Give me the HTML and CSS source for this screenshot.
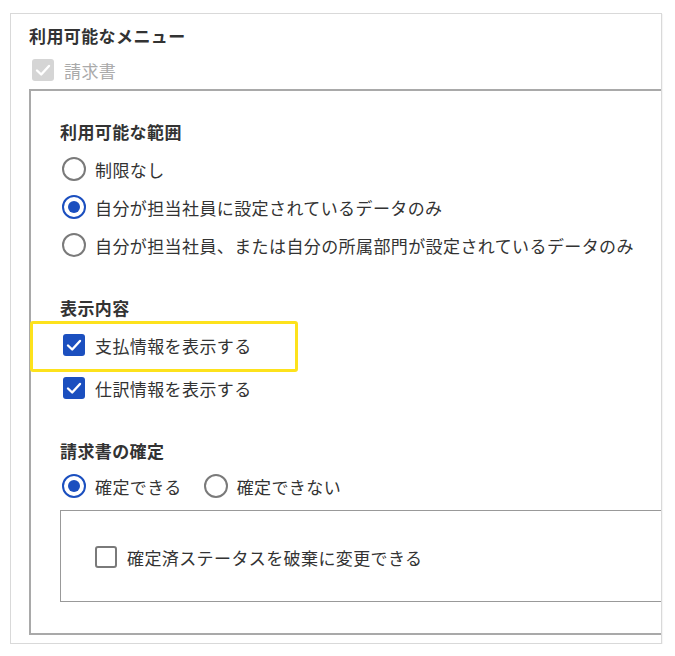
FILE: index.html
```html
<!DOCTYPE html>
<html lang="ja">
<head>
<meta charset="utf-8">
<link rel="stylesheet" href="styles.css">
</head>
<body>
<div class="panel">
  <div class="title">利用可能なメニュー</div>
  <div class="row menu-row">
    <span class="cb cb-disabled"><svg viewBox="0 0 22 22"><polyline points="5,11.5 9.2,15.5 17,7"/></svg></span>
    <span class="label-disabled">請求書</span>
  </div>
  <div class="settings">
    <div class="section">
      <div class="heading">利用可能な範囲</div>
      <div class="opts">
        <div class="row"><span class="radio"></span><span>制限なし</span></div>
        <div class="row"><span class="radio on"></span><span>自分が担当社員に設定されているデータのみ</span></div>
        <div class="row"><span class="radio"></span><span>自分が担当社員、または自分の所属部門が設定されているデータのみ</span></div>
      </div>
    </div>
    <div class="section">
      <div class="heading">表示内容</div>
      <div class="opts checks">
        <div class="row highlighted">
          <span class="cb cb-on"><svg viewBox="0 0 22 22"><polyline points="5,11.5 9.2,15.5 17,7"/></svg></span>
          <span>支払情報を表示する</span>
          <span class="highlight"></span>
        </div>
        <div class="row">
          <span class="cb cb-on"><svg viewBox="0 0 22 22"><polyline points="5,11.5 9.2,15.5 17,7"/></svg></span>
          <span>仕訳情報を表示する</span>
        </div>
      </div>
    </div>
    <div class="section">
      <div class="heading">請求書の確定</div>
      <div class="opts inline">
        <div class="row"><span class="radio on"></span><span>確定できる</span></div>
        <div class="row"><span class="radio"></span><span>確定できない</span></div>
      </div>
      <div class="subbox">
        <div class="row">
          <span class="cb cb-off"></span>
          <span>確定済ステータスを破棄に変更できる</span>
        </div>
      </div>
    </div>
  </div>
</div>
</body>
</html>
```

FILE: styles.css
```css
html, body {
  margin: 0;
  padding: 0;
  background: #fff;
}
body {
  padding: 13px 0 0 10px;
  font-family: "Noto Sans CJK JP", "Noto Sans", sans-serif;
  font-size: 17px;
  letter-spacing: 0.4px;
  color: #333;
}
.panel {
  box-sizing: border-box;
  width: 652px;
  border: 1px solid #d9d9d9;
  box-shadow: 1px 1px 1px rgba(0,0,0,0.04);
  padding: 10px 0 8px 18px;
  overflow: hidden;
}
.title {
  font-weight: bold;
  line-height: 24px;
  height: 24px;
}
.row {
  display: flex;
  align-items: center;
  height: 38px;
  white-space: nowrap;
}
.menu-row {
  margin-top: 3px;
}
.label-disabled {
  color: #aaa;
}
.cb {
  box-sizing: border-box;
  width: 22px;
  height: 22px;
  border-radius: 3px;
  margin: 0 10px 0 3px;
  flex: none;
  display: flex;
}
.cb svg {
  width: 22px;
  height: 22px;
}
.cb polyline {
  fill: none;
  stroke: #fff;
  stroke-width: 2.4;
  stroke-linecap: round;
  stroke-linejoin: round;
}
.cb-disabled {
  background: #d5d5d5;
}
.cb-on {
  background: #1b4fbf;
}
.cb-off {
  border: 2px solid #7a7a7a;
  background: #fff;
}
.settings {
  width: 700px;
  border: 2px solid #a9a9a9;
  padding: 29px 0 31px 29px;
}
.section + .section {
  margin-top: 32px;
}
.heading {
  font-weight: bold;
  line-height: 24px;
  height: 24px;
}
.opts {
  margin-top: 6px;
}
.radio {
  box-sizing: border-box;
  width: 24px;
  height: 24px;
  border-radius: 50%;
  border: 2px solid #7a7a7a;
  margin: 0 9px 0 2px;
  flex: none;
  display: flex;
  align-items: center;
  justify-content: center;
}
.radio.on {
  border-color: #1b4fbf;
}
.radio.on::after {
  content: "";
  width: 12px;
  height: 12px;
  border-radius: 50%;
  background: #1b4fbf;
}
.checks {
  display: flex;
  flex-direction: column;
  gap: 5px;
}
.highlighted {
  position: relative;
}
.highlight {
  position: absolute;
  left: -30px;
  top: -5px;
  width: 268px;
  height: 51px;
  box-sizing: border-box;
  border: 3px solid #fde21c;
  border-radius: 3px;
}
.inline {
  display: flex;
  gap: 20px;
  margin-top: 4px;
}
.subbox {
  margin-top: 5px;
  border: 1px solid #999;
  padding: 27px 0 25px 31px;
}
```
